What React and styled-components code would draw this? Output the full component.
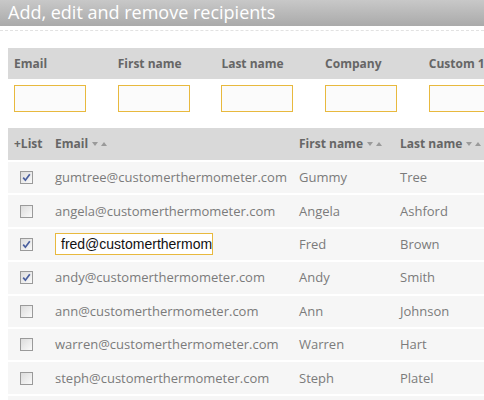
import React from "react";
import styled, { createGlobalStyle } from "styled-components";

const GlobalStyle = createGlobalStyle`
  html, body {
    margin: 0;
    padding: 0;
    background: #fff;
    overflow: hidden;
  }
  body {
    font-family: "Open Sans", "Liberation Sans", sans-serif;
    width: 484px;
  }
`;

const Page = styled.div`
  width: 484px;
  height: 400px;
  overflow: hidden;
`;

const TitleBar = styled.div`
  height: 26px;
  padding-left: 8px;
  background: linear-gradient(#c8c8c8, #aaaaaa);
  color: #fff;
  font-size: 18px;
  line-height: 25px;
  white-space: nowrap;
`;

const Dashed = styled.div`
  margin-top: 4px;
  border-top: 1px dashed #e2e2e2;
  height: 0;
`;

const Content = styled.div`
  padding: 17px 0 0 8px;
`;

const FilterGrid = styled.div`
  display: grid;
  grid-template-columns: repeat(5, 103.7px);
  width: 560px;
`;

const FilterHead = styled.div`
  height: 31px;
  background: #d9d9d9;
  color: #666;
  font-weight: 700;
  font-size: 12px;
  line-height: 31px;
  padding-left: 6px;
  white-space: nowrap;
`;

const FilterCell = styled.div`
  padding: 6px 0 16px 6px;
`;

const FilterInput = styled.div`
  width: 70px;
  height: 25px;
  border: 1px solid #e8b93e;
  background: #fbfbfb;
`;

const Table = styled.div`
  width: 560px;
  display: grid;
  grid-template-columns: 41px 244px 101px 174px;
  row-gap: 2px;
  background: #fff;
`;

const HeadCell = styled.div`
  height: 32px;
  background: #d9d9d9;
  color: #666;
  font-weight: 700;
  font-size: 12px;
  line-height: 32px;
  padding-left: 6px;
  white-space: nowrap;
  display: flex;
  align-items: center;
`;

const Arrows = styled.span`
  display: inline-flex;
  align-items: center;
  gap: 3px;
  margin-left: 4px;
`;

const Tri = styled.span`
  width: 0;
  height: 0;
  border-left: 3.5px solid transparent;
  border-right: 3.5px solid transparent;
  ${(p) =>
    p.up
      ? "border-bottom: 4px solid #9a9a9a;"
      : "border-top: 4px solid #9a9a9a;"}
`;

const Cell = styled.div`
  height: 31.4px;
  background: #f6f6f6;
  color: #7b7b7b;
  font-size: 13px;
  line-height: 31px;
  padding-left: 6px;
  white-space: nowrap;
  overflow: hidden;
  display: flex;
  align-items: center;
`;

const Box = styled.span`
  width: 11px;
  height: 11px;
  margin-left: 6px;
  border: 1px solid #9a9a9a;
  background: linear-gradient(135deg, #dcdcdc, #fafafa);
  display: inline-flex;
  align-items: center;
  justify-content: center;
`;

const EditInput = styled.div`
  width: 151px;
  height: 20px;
  border: 1px solid #e8b93e;
  background: #fff;
  color: #111;
  font-family: Arial, "Liberation Sans", sans-serif;
  font-size: 14px;
  line-height: 20px;
  padding-left: 5px;
  overflow: hidden;
  white-space: nowrap;
`;

function Check({ checked }) {
  return (
    <Box>
      {checked && (
        <svg width="9" height="9" viewBox="0 0 9 9">
          <path
            d="M1.2 4.6 L3.4 7.2 L7.8 1.2"
            fill="none"
            stroke="#4a5f9e"
            strokeWidth="1.7"
          />
        </svg>
      )}
    </Box>
  );
}

function Sort() {
  return (
    <Arrows>
      <Tri />
      <Tri up />
    </Arrows>
  );
}

const rows = [
  { email: "gumtree@customerthermometer.com", first: "Gummy", last: "Tree", checked: true },
  { email: "angela@customerthermometer.com", first: "Angela", last: "Ashford" },
  { email: "fred@customerthermometer.com", first: "Fred", last: "Brown", checked: true, editing: true },
  { email: "andy@customerthermometer.com", first: "Andy", last: "Smith", checked: true },
  { email: "ann@customerthermometer.com", first: "Ann", last: "Johnson" },
  { email: "warren@customerthermometer.com", first: "Warren", last: "Hart" },
  { email: "steph@customerthermometer.com", first: "Steph", last: "Platel" },
  { email: "", first: "", last: "" },
];

const filters = ["Email", "First name", "Last name", "Company", "Custom 1"];

export default function App() {
  return (
    <Page>
      <GlobalStyle />
      <TitleBar>Add, edit and remove recipients</TitleBar>
      <Dashed />
      <Content>
        <FilterGrid>
          {filters.map((f) => (
            <FilterHead key={f}>{f}</FilterHead>
          ))}
          {filters.map((f) => (
            <FilterCell key={f}>
              <FilterInput />
            </FilterCell>
          ))}
        </FilterGrid>
        <Table>
          <HeadCell>+List</HeadCell>
          <HeadCell>
            Email
            <Sort />
          </HeadCell>
          <HeadCell>
            First name
            <Sort />
          </HeadCell>
          <HeadCell>
            Last name
            <Sort />
          </HeadCell>
          {rows.map((r, i) => (
            <React.Fragment key={i}>
              <Cell>{r.email && <Check checked={r.checked} />}</Cell>
              <Cell>
                {r.editing ? <EditInput>{r.email}</EditInput> : r.email}
              </Cell>
              <Cell>{r.first}</Cell>
              <Cell>{r.last}</Cell>
            </React.Fragment>
          ))}
        </Table>
      </Content>
    </Page>
  );
}
